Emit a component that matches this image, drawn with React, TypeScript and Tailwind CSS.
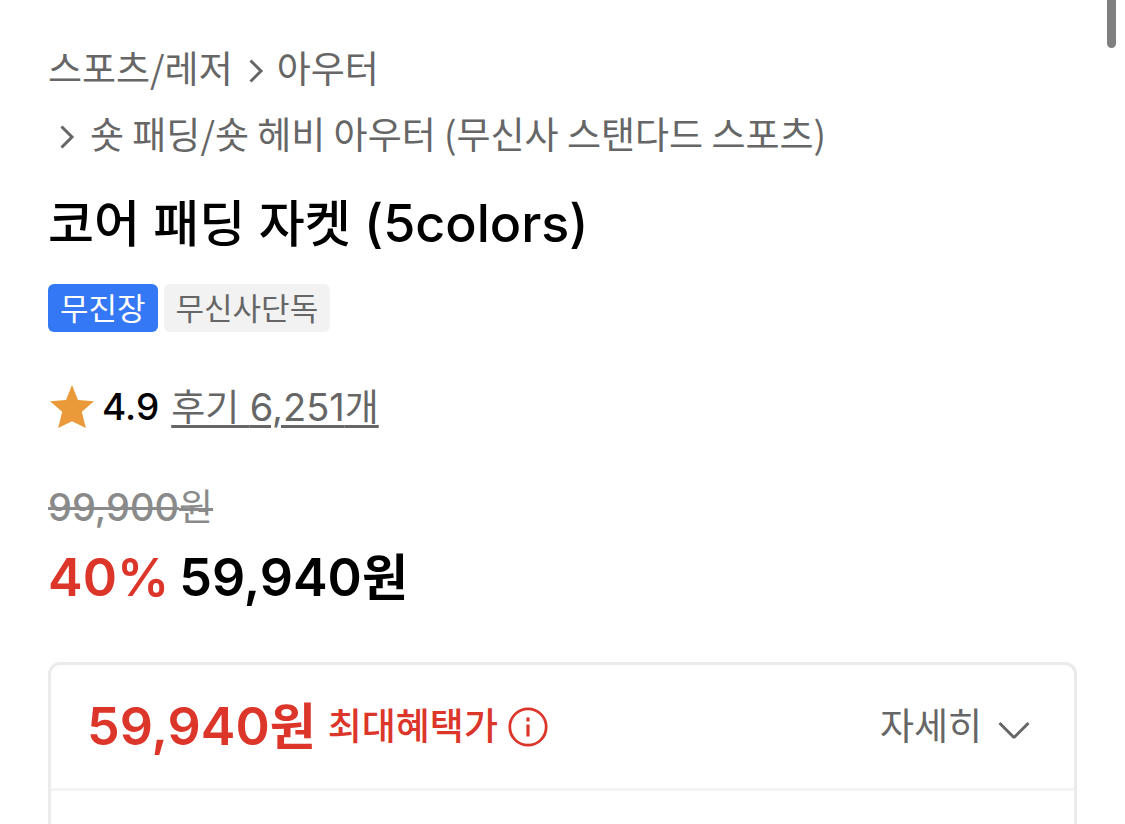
import type { ReactNode } from "react";

const CrumbArrow = () => (
  <svg className="h-8 w-4 shrink-0" viewBox="0 0 16 32" fill="none" stroke="#666666" strokeWidth="3" aria-hidden="true">
    <path d="M1.5 9.5 12 20 1.5 30.5" />
  </svg>
);

const Star = () => (
  <svg className="h-11 w-11 shrink-0" viewBox="0 0 44 44" fill="#eb9a39" aria-hidden="true">
    <path d="M22 0 28 15 44 16.2 31.8 26.8 35.8 43 22 36.2 8.2 43 12.2 26.8 0 16.2 16 15Z" />
  </svg>
);

const InfoIcon = () => (
  <svg className="h-10 w-10" viewBox="0 0 40 40" fill="none" stroke="#dc352a" aria-hidden="true">
    <circle cx="20" cy="20" r="18.2" strokeWidth="2.8" />
    <path d="M20 17.5V29.5M20 10.5V14.5" strokeWidth="3.2" />
  </svg>
);

const ChevronDown = () => (
  <svg className="h-7 w-8" viewBox="0 0 32 28" fill="none" stroke="#666666" strokeWidth="3" aria-hidden="true">
    <path d="M1.5 10 16 24.5 30.5 10" strokeLinejoin="bevel" />
  </svg>
);

const Badge = ({ className, children }: { className: string; children: ReactNode }) => (
  <span className={`flex h-12 items-center rounded-md px-3 text-[31px] leading-none ${className}`}>{children}</span>
);

const Price = () => (
  <>
    59,940<span className="text-[50px]">원</span>
  </>
);

const App = () => (
  <main className="flex min-h-screen flex-col bg-white px-12 pt-[34px] font-['Inter','Noto_Sans_CJK_KR',sans-serif] text-black">
    <div className="fixed top-0 right-[9px] h-12 w-[9px] rounded-b-full bg-[#7f7f7f]" />

    <nav className="font-['Noto_Sans_CJK_KR',sans-serif] text-[37px] leading-[66px] text-[#666666]">
      <div className="flex items-center gap-3">
        <a href="#sports">스포츠/레저</a>
        <span className="flex items-center gap-3 pl-1">
          <CrumbArrow />
          <a href="#outer">아우터</a>
        </span>
      </div>
      <div className="flex items-center gap-3.5 pl-3">
        <CrumbArrow />
        <a href="#short-padding">숏 패딩/숏 헤비 아우터 (무신사 스탠다드 스포츠)</a>
      </div>
    </nav>

    <h1 className="mt-[22px] text-[50px] leading-[72px] font-medium">
      코어 패딩 자켓 <span className="text-[52px]">(5colors)</span>
    </h1>

    <div className="mt-6 flex gap-[6px]">
      <Badge className="bg-[#3478f6] text-white">무진장</Badge>
      <Badge className="bg-[#f2f2f2] text-[#666666]">무신사단독</Badge>
    </div>

    <div className="mt-12 flex h-[54px] items-center pl-[2px] text-[37px]">
      <Star />
      <span className="ml-2 font-medium">4.9</span>
      <a href="#reviews" className="ml-3 text-[#666666] underline decoration-[3px] underline-offset-4">
        후기 <span className="text-[38px]">6,251</span>개
      </a>
    </div>

    <div className="mt-12 text-[38px] leading-[50px] text-[#8a8a8a]">
      <del className="font-medium decoration-[3px]">
        99,900<span className="text-[37px] font-normal">원</span>
      </del>
    </div>
    <div className="mt-1.5 flex items-baseline gap-2.5 text-[52px] leading-[78px] font-semibold">
      <span className="text-[#dc352a]">40%</span>
      <span>
        <Price />
      </span>
    </div>

    <section className="mt-[45px] flex-1 rounded-t-xl border-3 border-b-0 border-[#ebebeb]">
      <div className="flex h-[126px] items-center justify-between border-b-3 border-[#f4f4f4] pr-11 pl-9">
        <div className="flex items-center text-[#dc352a]">
          <span className="text-[52px] leading-[78px] font-semibold">
            <Price />
          </span>
          <span className="ml-3 text-[37px] font-medium">최대혜택가</span>
          <button type="button" aria-label="최대혜택가 안내" className="ml-2.5">
            <InfoIcon />
          </button>
        </div>
        <button type="button" className="flex items-center gap-4 text-[37px] text-[#666666]">
          자세히
          <ChevronDown />
        </button>
      </div>
    </section>
  </main>
);

export default App;
